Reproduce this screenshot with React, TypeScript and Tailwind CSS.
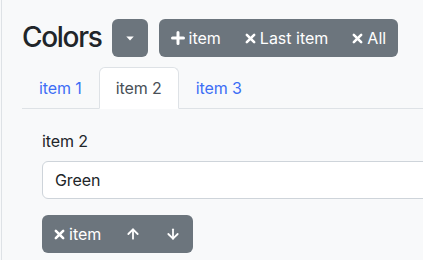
import { ArrowDown, ArrowUp } from "lucide-react"

const font = { fontFamily: "Inter, 'Noto Sans', sans-serif" }

function PlusIcon() {
  return (
    <svg viewBox="0 0 14 14" className="h-[14px] w-[14px]" fill="none" stroke="currentColor" strokeWidth="3" strokeLinecap="round">
      <path d="M7 1.5v11M1.5 7h11" />
    </svg>
  )
}

function XIcon() {
  return (
    <svg viewBox="0 0 12 12" className="h-[11px] w-[11px]" fill="none" stroke="currentColor" strokeWidth="2.8" strokeLinecap="round">
      <path d="M2 2l8 8M10 2l-8 8" />
    </svg>
  )
}

function Caret() {
  return (
    <svg viewBox="0 0 10 6" className="h-[5px] w-[10px]" fill="currentColor">
      <path d="M0.5 0.5h9L5 5.5z" />
    </svg>
  )
}

const btn =
  "flex h-[38px] items-center gap-1 px-3 text-base leading-6 tracking-normal text-white bg-[#6c757d]"

export default function App() {
  return (
    <div className="h-[260px] w-full overflow-hidden bg-[#f8f9fa] text-[#212529]" style={font}>
      <div className="ml-px h-full border-l border-[#dee2e6] pl-5">
        <div className="flex items-center pt-[19px]">
          <h3 className="text-[28px] font-medium leading-[1.2] tracking-[-1.3px]">Colors</h3>
          <button className={`${btn} ml-[10px] w-9 justify-center rounded-md px-0`}>
            <Caret />
          </button>
          <div className="ml-[11px] flex overflow-hidden rounded-md">
            <button className={btn}>
              <PlusIcon />
              <span>item</span>
            </button>
            <button className={btn}>
              <XIcon />
              <span>Last item</span>
            </button>
            <button className={btn}>
              <XIcon />
              <span>All</span>
            </button>
          </div>
        </div>

        <ul className="mt-[10px] flex border-b border-[#dee2e6] tracking-[-0.1px]">
          <li className="-mb-px">
            <a className="block border border-transparent px-4 py-2 leading-6 text-[#3d6ef5]">item 1</a>
          </li>
          <li className="-mb-px">
            <a className="block rounded-t-md border border-[#dee2e6] border-b-white bg-white px-4 py-2 leading-6 text-[#495057]">
              item 2
            </a>
          </li>
          <li className="-mb-px">
            <a className="block border border-transparent px-4 py-2 leading-6 text-[#3d6ef5]">item 3</a>
          </li>
        </ul>

        <div className="p-5 tracking-[-0.1px]">
          <label className="mb-2 block leading-6">item 2</label>
          <input
            readOnly
            value="Green"
            className="block h-[38px] w-[600px] rounded-md border border-[#ced4da] bg-white px-3 leading-6 tracking-[-0.1px] text-[#212529] outline-none"
          />
          <div className="mt-4 flex w-fit overflow-hidden rounded-md">
            <button className={btn}>
              <XIcon />
              <span>item</span>
            </button>
            <button className={`${btn} w-10 justify-center px-0`}>
              <ArrowUp size={22} strokeWidth={2.7} />
            </button>
            <button className={`${btn} w-10 justify-center px-0`}>
              <ArrowDown size={22} strokeWidth={2.7} />
            </button>
          </div>
        </div>
      </div>
    </div>
  )
}
